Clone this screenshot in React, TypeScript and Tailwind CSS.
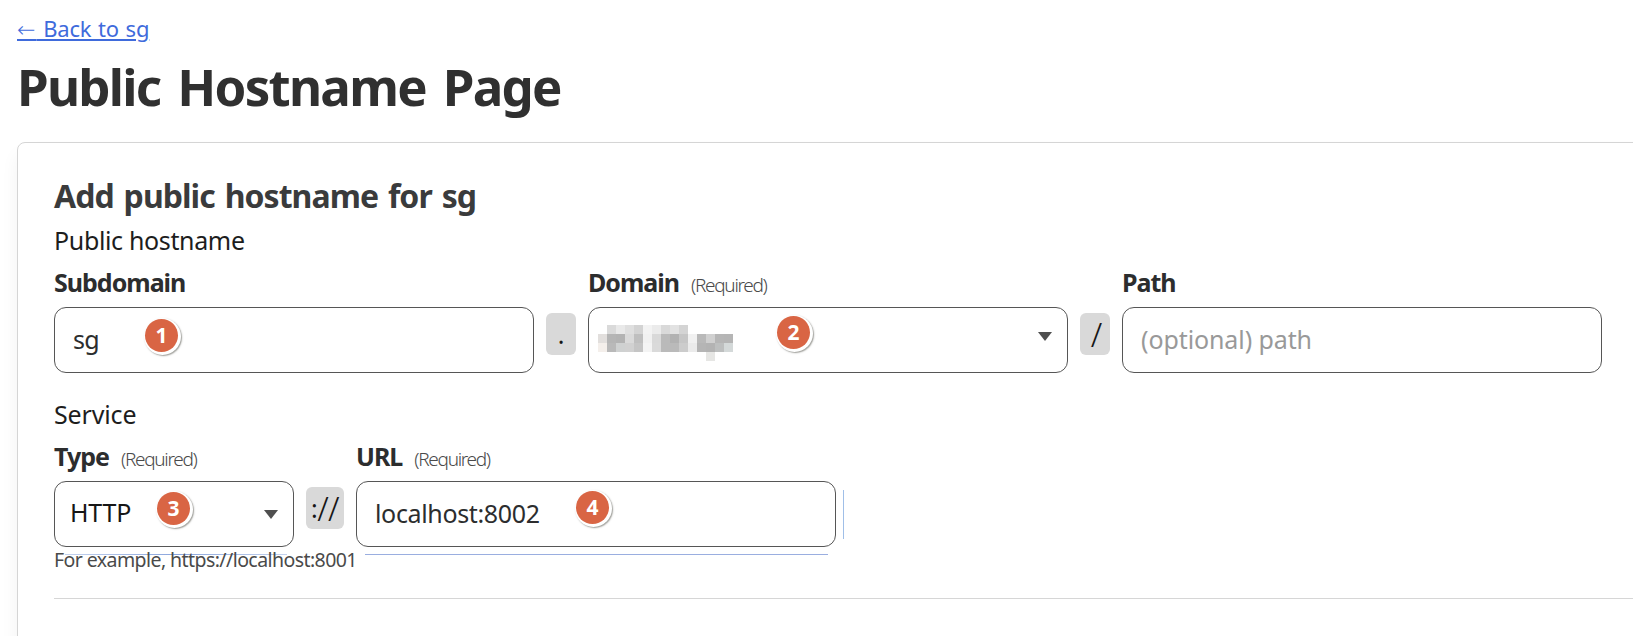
import type { ReactNode } from "react";

const MOSAIC: string[][] = [
  ["#fff", "#dadada", "#e9e9e9", "#dfdfdf", "#d3d3d3", "#f3f3f3", "#ebebeb", "#d9d9d9", "#e2e2e2", "#d4d4d4", "#fff", "#fff", "#fff", "#fff", "#fff"],
  ["#e2dfdd", "#b5b5b5", "#b3b3b3", "#dadada", "#bfbfbf", "#f1f1f1", "#d9d9d9", "#bababa", "#b2b2b2", "#c6c6c6", "#f1f1f1", "#b9b9b9", "#d0d0d0", "#b6b6b6", "#b5b5b5"],
  ["#f4efeb", "#b9b9b9", "#cfd1d1", "#d1d1d1", "#c5c5c5", "#f4f4f4", "#dadada", "#bababa", "#bababa", "#cccccc", "#ebebeb", "#b5b5b5", "#b3b3b3", "#bdbfbf", "#d4d9d9"],
  ["#fff", "#fff", "#fff", "#fff", "#fff", "#fff", "#fff", "#fff", "#fff", "#fff", "#fff", "#fff", "#e6e6e4", "#fff", "#fff"],
];

function Mosaic() {
  return (
    <div className="ml-[9px] mt-[17px] grid grid-cols-[repeat(15,9px)] self-start">
      {MOSAIC.flat().map((color, i) => (
        <span key={i} className="h-[9px] w-[9px]" style={{ backgroundColor: color }} />
      ))}
    </div>
  );
}

function Badge({ n, className }: { n: number; className: string }) {
  return (
    <span
      className={`absolute flex h-[33px] w-[33px] items-center justify-center rounded-full bg-[#d96544] text-[21px] leading-none font-bold text-white shadow-[1px_1px_0_2px_#ffffff,2px_2px_1.5px_2px_rgba(60,60,50,0.5)] ${className}`}
    >
      {n}
    </span>
  );
}

function Label({ children, required }: { children: ReactNode; required?: boolean }) {
  return (
    <div className="flex h-8 items-baseline gap-3 leading-8">
      <span className="text-[25px] font-bold tracking-[-1px] text-[#2c2d2e]">{children}</span>
      {required && (
        <span className="text-[19px] font-light tracking-[-1.3px] text-[#4a4a4a]">(Required)</span>
      )}
    </div>
  );
}

function Field({
  label,
  required,
  width,
  children,
}: {
  label: string;
  required?: boolean;
  width: string;
  children: ReactNode;
}) {
  return (
    <div className={`shrink-0 ${width}`}>
      <Label required={required}>{label}</Label>
      <div className="relative mt-[9px] flex h-[66px] items-center rounded-xl border border-[#565656] bg-white text-[25px] leading-8 text-[#2c2d2e]">
        {children}
      </div>
    </div>
  );
}

function Separator({ children, width }: { children: ReactNode; width: string }) {
  return (
    <div
      className={`mt-[47px] flex h-[42px] shrink-0 items-center justify-center rounded-md bg-[#d9d9d9] text-[25px] leading-8 text-[#161616] ${width}`}
    >
      {children}
    </div>
  );
}

function Arrow({ className }: { className: string }) {
  return (
    <svg className={`mr-[15px] ml-auto h-[9px] w-[14px] ${className}`} viewBox="0 0 14 9" fill="#4f4f4f">
      <path d="M0 0H14L7 9Z" />
    </svg>
  );
}

export default function App() {
  return (
    <div className="h-[636px] w-full overflow-hidden bg-white pt-[13px] pl-[17px] font-['Noto_Sans','Open_Sans',sans-serif]">
      <a
        href="#"
        className="block h-[30px] w-fit text-[22px] leading-[30px] tracking-[-0.2px] [word-spacing:1.2px] text-[#3f6bdc] underline decoration-[1.5px] underline-offset-[2px]"
      >
        <span className="font-['DejaVu_Sans'] font-extralight tracking-[1px]">←</span> Back to sg
      </a>
      <h1 className="mt-[13px] h-[60px] text-[51px] leading-[60px] font-bold tracking-[-1.75px] [word-spacing:5.5px] text-[#303030]">
        Public Hostname Page
      </h1>

      <main className="mt-[26px] h-[600px] w-[1700px] rounded-tl-lg border border-[#d5d5d5] bg-white pt-[33px] pl-9 shadow-[0_12px_18px_rgba(0,0,0,0.05)]">
        <h2 className="h-10 text-[32px] leading-10 font-bold tracking-[-0.95px] [word-spacing:2.5px] text-[#3a3b3c]">
          Add public hostname for sg
        </h2>

        <p className="mt-2 h-8 text-[25px] leading-8 tracking-[-0.35px] text-[#1d1d1d]">Public hostname</p>
        <div className="mt-[10px] flex">
          <Field label="Subdomain" width="w-[480px]">
            <span className="-mt-0.5 pl-[18px] tracking-[-0.8px]">sg</span>
            <Badge n={1} className="top-[11px] left-[90px]" />
          </Field>
          <div className="px-3">
            <Separator width="w-[30px]">.</Separator>
          </div>
          <Field label="Domain" required width="w-[480px]">
            <Mosaic />
            <Badge n={2} className="top-[8px] left-[188px]" />
            <Arrow className="mb-[7px]" />
          </Field>
          <div className="px-3">
            <Separator width="w-[30px]">
              <span className="mt-px ml-[3px] text-[33px] font-light">/</span>
            </Separator>
          </div>
          <Field label="Path" width="w-[480px]">
            <span className="-mt-0.5 pl-[18px] tracking-[-0.1px] text-[#999]">(optional) path</span>
          </Field>
        </div>

        <p className="mt-[25px] h-8 text-[25px] leading-8 tracking-[-0.15px] text-[#1d1d1d]">Service</p>
        <div className="mt-[10px] flex">
          <Field label="Type" required width="w-[240px]">
            <span className="-mt-[4px] pl-[15px] tracking-[-0.2px] text-[#161616]">HTTP</span>
            <Badge n={3} className="top-[10px] left-[102px]" />
            <Arrow className="-mb-px" />
            <span className="absolute top-[72px] left-[10px] h-px w-[222px] bg-linear-to-r from-[#c5d3ee] via-[#8ba6dd] via-50% to-[#c5d3ee]" />
          </Field>
          <div className="px-3">
            <Separator width="w-[38px]">
              <span className="tracking-[-0.5px]">:</span>
              <span className="mt-px text-[33px] font-light tracking-[-0.5px]">//</span>
            </Separator>
          </div>
          <Field label="URL" required width="w-[480px]">
            <span className="-mt-0.5 pl-[18px] tracking-[-0.35px]">localhost:8002</span>
            <Badge n={4} className="top-[9px] left-[219px]" />
            <span className="absolute top-[72px] left-[8px] h-px w-[463px] bg-[#9aaee0]" />
            <span className="absolute top-[8px] left-[486px] h-[49px] w-px bg-[#a0bfe8]" />
          </Field>
        </div>
        <p className="relative mt-px h-6 text-[19.5px] leading-6 tracking-[-0.57px] text-[#4a4a4a]">
          For example, https://localhost:8001
        </p>
        <hr className="mt-[26px] border-t border-[#d6d6d6]" />
      </main>
    </div>
  );
}
